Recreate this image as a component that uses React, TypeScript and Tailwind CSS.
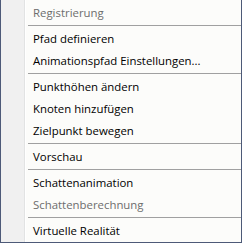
type Entry = { label?: string; disabled?: boolean; sep?: boolean };

const entries: Entry[] = [
  { label: "Registrierung", disabled: true },
  { sep: true },
  { label: "Pfad definieren" },
  { label: "Animationspfad Einstellungen..." },
  { sep: true },
  { label: "Punkthöhen ändern" },
  { label: "Knoten hinzufügen" },
  { label: "Zielpunkt bewegen" },
  { sep: true },
  { label: "Vorschau" },
  { sep: true },
  { label: "Schattenanimation" },
  { label: "Schattenberechnung", disabled: true },
  { sep: true },
  { label: "Virtuelle Realität" },
];

export default function App() {
  return (
    <div className="w-[242px] h-[243px] overflow-hidden bg-[#f0f0f0]">
      <div className="relative flex h-[243px] w-[242px] border-x border-b border-[#4d5a78] bg-[#fcfcfa] font-['Open_Sans','Noto_Sans',sans-serif] text-[11.4px]">
        {/* icon gutter */}
        <div className="w-[23px] shrink-0 bg-[#f0f0f0]" />
        <div className="w-px shrink-0 bg-[#e2e3e3]" />
        <div className="w-px shrink-0 bg-white" />
        <div className="flex flex-1 flex-col pt-px">
          {entries.map((e, i) =>
            e.sep ? (
              <div key={i} className="h-[4px] pl-[2px] pt-[2px]">
                <div className="h-px bg-[#a0a0a0]" />
              </div>
            ) : (
              <div
                key={i}
                className={
                  "flex h-[22px] items-center pl-[7px] pt-[2px] leading-none " +
                  (e.disabled ? "text-[#6d6d6d]" : "text-black")
                }
              >
                {e.label}
              </div>
            )
          )}
        </div>
      </div>
    </div>
  );
}
